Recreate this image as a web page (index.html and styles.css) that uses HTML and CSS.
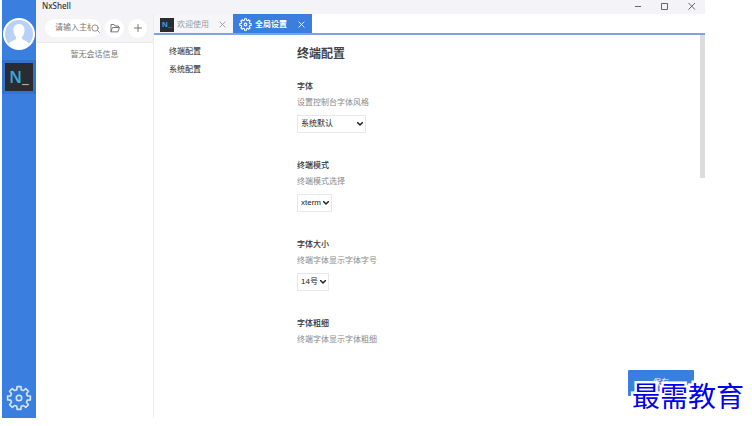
FILE: index.html
```html
<!DOCTYPE html>
<html lang="zh-CN">
<head>
<meta charset="utf-8">
<title>NxShell</title>
<link rel="stylesheet" href="styles.css">
</head>
<body>
<div class="app">
  <nav class="rail" aria-label="主导航">
    <button class="avatar" aria-label="用户">
      <svg viewBox="0 0 32 32"><circle cx="16" cy="16" r="15" fill="#b9d1f6" stroke="#fff" stroke-width="2"/><path d="M16 6c-4 0-6 3-5.500 7 .3 3 1.500 5 2.500 6v2c-2 1.500-6 2-7 5 3 3 6 4.500 10 4.500s7-1.500 10-4.500c-1-3-5-3.500-7-5v-2c1-1 2.200-3 2.500-6 .5-4-1.500-7-5.500-7z" fill="#fff" stroke="none"/></svg>
    </button>
    <button class="terminal" aria-label="终端">N<span class="cursor">_</span></button>
    <button class="gear" aria-label="设置">
      <svg viewBox="0 0 24 24"><use href="#gear"/></svg>
    </button>
  </nav>
  <div class="window">
    <header class="titlebar">
      <span class="title">NxShell</span>
      <div class="controls">
        <button aria-label="最小化"><svg viewBox="0 0 8 8"><path d="M1 4.500h6"/></svg></button>
        <button aria-label="最大化"><svg viewBox="0 0 8 8"><path d="M.5 1.500h6v6h-6z"/></svg></button>
        <button aria-label="关闭"><svg viewBox="0 0 8 8"><path d="M.5 1l6.500 6.500M7 1L.5 7.500"/></svg></button>
      </div>
    </header>
    <div class="body">
      <aside class="sessions">
        <div class="tools">
          <label class="search">
            <input type="text" placeholder="请输入主机" aria-label="请输入主机">
            <svg viewBox="0 0 10 10"><circle cx="4.500" cy="4.500" r="3.500"/><path d="M7 7l2.500 2.500"/></svg>
          </label>
          <button class="round" aria-label="打开"><svg viewBox="0 0 10 10"><path d="M1 8.500v-7h3l1 1.500h3.500v1.500M1 8.500l1.500-4h7l-1.500 4z"/></svg></button>
          <button class="round" aria-label="新建"><svg viewBox="0 0 10 10"><path d="M5 1.500v7M1.500 5h7"/></svg></button>
        </div>
        <p class="empty">暂无会话信息</p>
      </aside>
      <main class="main">
        <div class="tabs">
          <div class="tab">
            <span class="logo">N<span class="cursor">_</span></span>
            <span class="name">欢迎使用</span>
            <button class="close" aria-label="关闭"><svg viewBox="0 0 8 8"><path d="M1 1l6 6M7 1L1 7"/></svg></button>
          </div>
          <div class="tab active">
            <svg class="tabgear" viewBox="0 0 24 24"><use href="#gear"/></svg>
            <span class="name">全局设置</span>
            <button class="close" aria-label="关闭"><svg viewBox="0 0 8 8"><path d="M1 1l6 6M7 1L1 7"/></svg></button>
          </div>
        </div>
        <div class="content">
          <nav class="menu"><a href="#terminal">终端配置</a><a href="#system">系统配置</a></nav>
          <form class="settings" id="terminal">
            <h1>终端配置</h1>
            <section>
              <label for="font">字体</label>
              <p>设置控制台字体风格</p>
              <span class="select wide"><select id="font"><option>系统默认</option></select><svg viewBox="0 0 6 4"><path d="M.5.5L3 3 5.500.5"/></svg></span>
            </section>
            <section>
              <label for="mode">终端模式</label>
              <p>终端模式选择</p>
              <span class="select"><select id="mode"><option>xterm</option></select><svg viewBox="0 0 6 4"><path d="M.5.5L3 3 5.500.5"/></svg></span>
            </section>
            <section>
              <label for="size">字体大小</label>
              <p>终端字体显示字体字号</p>
              <span class="select"><select id="size"><option>14号</option></select><svg viewBox="0 0 6 4"><path d="M.5.5L3 3 5.500.5"/></svg></span>
            </section>
            <section>
              <h2>字体粗细</h2>
              <p>终端字体显示字体粗细</p>
            </section>
          </form>
          <div class="scroll"></div>
        </div>
        <footer class="actions"><button class="save">保存</button></footer>
      </main>
    </div>
  </div>
</div>
<div class="watermark">最需教育</div>
<svg class="defs" aria-hidden="true"><defs><g id="gear">
  <path d="M10 4.300L10.200 1.500H13.800L14 4.300 16 5.100 18.200 3.300 20.700 5.800 18.900 8 19.700 10 22.500 10.200V13.800L19.700 14 18.900 16 20.700 18.200 18.200 20.700 16 18.900 14 19.700 13.800 22.500H10.200L10 19.700 8 18.900 5.800 20.700 3.300 18.200 5.100 16 4.300 14 1.500 13.800V10.200L4.300 10 5.100 8 3.300 5.800 5.800 3.300 8 5.100z"/><circle cx="12" cy="12" r="2.500"/>
</g></defs></svg>
</body>
</html>
```

FILE: styles.css
```css
* { box-sizing: border-box; }
body {
  margin: 0;
  background: #fff;
  color: #333;
  font: 8px/12px "Liberation Sans", "Noto Sans CJK SC", sans-serif;
}
button { border: 0; padding: 0; margin: 0; background: none; color: inherit; font: inherit; }
svg { display: block; fill: none; stroke: currentColor; stroke-linecap: round; stroke-linejoin: round; }
h1, h2, p { margin: 0; }
.defs { position: absolute; width: 0; height: 0; }

.app { display: flex; height: calc(100vh - 8px); margin: 0 47px 0 2px; }
.rail {
  flex: 0 0 34px;
  display: flex;
  flex-direction: column;
  align-items: center;
  padding: 18px 0 7px;
  background: #3a7fe0;
}
.avatar svg { width: 32px; height: 32px; }
.terminal {
  width: 28px;
  height: 28px;
  margin-top: 13px;
  background: #292c33;
  outline: 3px solid #3474cf;
  color: #36a6dc;
  font-family: "Noto Sans", sans-serif;
  font-size: 16px;
  font-weight: 600;
  line-height: 28px;
}
.cursor { color: #b8a79b; }
.gear { margin-top: auto; color: #d5e5fc; }
.gear svg { width: 26px; height: 26px; stroke-width: 1.5; }

.window { flex: 1; min-width: 0; display: flex; flex-direction: column; }
.titlebar {
  display: flex;
  justify-content: space-between;
  align-items: center;
  height: 14px;
  padding: 0 9px 2px 6px;
  background: #f3f3f8;
}
.title { font-family: "Noto Sans", sans-serif; font-weight: 500; }
.controls { display: flex; gap: 19px; color: #666; }
.controls svg { width: 8px; height: 8px; stroke-width: 1; stroke-linecap: butt; stroke-linejoin: miter; }
.body { flex: 1; display: flex; min-height: 0; }

.sessions { flex: 0 0 118px; border-right: 1px solid #ededed; }
.tools {
  display: flex;
  align-items: center;
  gap: 4px;
  height: 29px;
  padding-left: 9px;
  background: #f4f4f6;
  border-bottom: 1px solid #e9e9ec;
}
.search {
  display: flex;
  align-items: center;
  width: 56px;
  height: 18px;
  padding: 0 1px 0 10px;
  border-radius: 9px;
  background: #fff;
  color: #888;
}
.search input { flex: 1; min-width: 0; padding: 0; border: 0; background: none; font: inherit; }
.search input::placeholder { color: #777; opacity: 1; }
.search svg { flex: none; width: 9px; height: 9px; }
.round { display: grid; place-items: center; width: 19px; height: 19px; border-radius: 50%; background: #fff; color: #777; }
.round svg { width: 10px; height: 10px; }
.empty { padding-top: 6px; text-align: center; color: #777; }

.main { flex: 1; min-width: 0; display: flex; flex-direction: column; }
.tabs { display: flex; flex: 0 0 21px; border-bottom: 2px solid #7aa5e0; }
.tab { display: flex; align-items: center; width: 79px; padding: 2px 4px 0 6px; background: #f6f6f8; color: #999; }
.tab.active { background: #3a7fe0; color: #fff; font-weight: bold; }
.logo { width: 14px; height: 14px; background: #292c33; color: #36a6dc; font-weight: bold; line-height: 14px; text-align: center; }
.tabgear { width: 13px; height: 13px; stroke-width: 2; }
.name { margin-left: 3px; }
.close { margin-left: auto; padding: 3px; }
.close svg { width: 7px; height: 7px; }

.content { flex: 1; display: flex; min-height: 0; }
.menu { flex: 0 0 143px; display: flex; flex-direction: column; gap: 6px; padding: 11px 0 0 15px; }
.menu a { color: #222; text-decoration: none; }
.settings { flex: 1; min-width: 0; padding-top: 9px; overflow: hidden; }
h1 { margin-bottom: 16px; color: #444; font-size: 12px; line-height: 20px; font-weight: bold; }
section { height: 79px; }
section label, h2 { display: block; font-size: 8px; line-height: 14px; font-weight: 500; }
section p { margin: 2px 0 5px; line-height: 14px; color: #888; }
.select { display: inline-grid; align-items: center; height: 18px; border: 1px solid #e8e8e8; }
.select select, .select svg { grid-area: 1 / 1; }
.select select {
  appearance: none;
  width: 100%;
  height: 16px;
  padding: 0 10px 0 3px;
  border: 0;
  background: none;
  color: #222;
  font: inherit;
}
.select svg { justify-self: end; width: 6px; height: 4px; margin-right: 2px; color: #222; stroke-width: 1.5; pointer-events: none; }
.wide { width: 69px; }
.scroll { width: 5px; height: 143px; background: #dcdcdc; }
.actions { flex: 0 0 70px; display: flex; justify-content: flex-end; align-items: flex-start; padding: 22px 11px 0 0; }
.save { width: 66px; height: 26px; border-radius: 1px; background: #3a7fe0; color: #fff; }

.watermark {
  position: absolute;
  right: 8px;
  bottom: 13px;
  color: #0000f0;
  font: 28px/36px "KaiTi", "Noto Sans CJK SC", sans-serif;
  -webkit-text-stroke: 5px #fff;
  paint-order: stroke fill;
}
```
